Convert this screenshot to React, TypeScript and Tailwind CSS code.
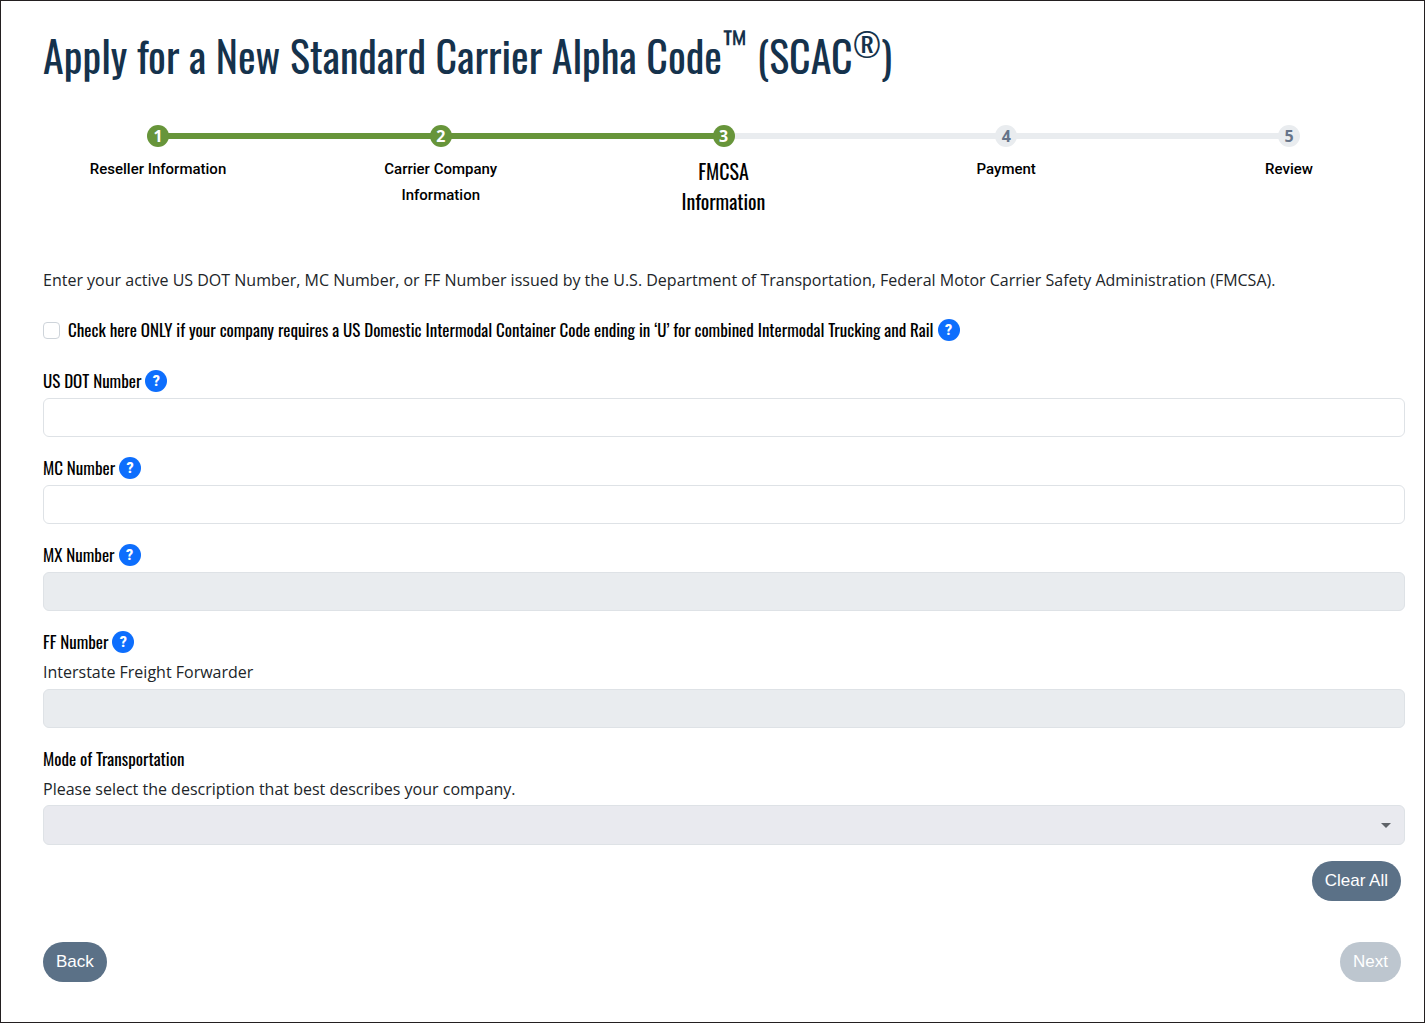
import { clsx } from 'clsx'

const steps = [
  { label: 'Reseller Information', state: 'done' },
  { label: 'Carrier Company\nInformation', state: 'done' },
  { label: 'FMCSA\nInformation', state: 'current' },
  { label: 'Payment', state: 'todo' },
  { label: 'Review', state: 'todo' },
]

const narrow = "font-['Oswald','Roboto_Condensed','Liberation_Sans_Narrow',sans-serif]"

const pill =
  "h-10 rounded-full px-[13px] font-['Liberation_Sans',sans-serif] text-[17px] text-white"

function Help({ topic }: { topic: string }) {
  return (
    <button
      type="button"
      aria-label={`Help for ${topic}`}
      className="flex size-[22px] shrink-0 items-center justify-center rounded-full bg-[#0d6efd] font-['Roboto',sans-serif] text-sm font-black text-white"
    >
      ?
    </button>
  )
}

function Stepper() {
  return (
    <div className="pr-9 pl-[35px]">
      <div className="mx-20 flex h-1.5">
        {steps.slice(1).map((step) => (
          <div
            key={step.label}
            className={clsx('flex-1', step.state === 'todo' ? 'bg-[#e9ecef]' : 'bg-[#67953a]')}
          />
        ))}
      </div>
      <ol className="relative -mt-3.5 flex h-[106px] justify-between">
        {steps.map((step, i) => (
          <li key={step.label} className="flex w-40 flex-col items-center gap-[9px]">
            <span
              className={clsx(
                'flex size-[22px] items-center justify-center rounded-full text-base font-bold',
                step.state === 'todo' ? 'bg-[#e9ecef] text-[#667489]' : 'bg-[#67953a] text-white',
              )}
            >
              {i + 1}
            </span>
            <span
              className={clsx(
                'text-center whitespace-pre-line text-black',
                step.state === 'current'
                  ? `${narrow} text-xl leading-[30px]`
                  : "font-['Roboto',sans-serif] text-[15px] leading-[26px] font-medium",
              )}
            >
              {step.label}
            </span>
          </li>
        ))}
      </ol>
    </div>
  )
}

type FieldProps = {
  id: string
  label: string
  hint?: string
  disabled?: boolean
}

function Field({ id, label, hint, disabled }: FieldProps) {
  return (
    <div className="mb-5">
      <div className="mb-1.5 flex h-[22px] items-center gap-1">
        <label htmlFor={id} className={`${narrow} text-[17px] leading-[22px] text-black`}>
          {label}
        </label>
        <Help topic={label} />
      </div>
      {hint && <p className="mb-1 leading-[26px]">{hint}</p>}
      <input
        id={id}
        type="text"
        disabled={disabled}
        className="block h-[39px] w-full rounded-md border border-[#dee2e6] bg-white px-3 disabled:bg-[#e9ecef]"
      />
    </div>
  )
}

export default function App() {
  return (
    <div className="min-h-screen border border-[#231f20] bg-white pt-5 pr-[19px] pb-9 pl-[42px] font-['Open_Sans',sans-serif] text-base text-[#212529]">
      <h1 className={`${narrow} text-[42px] leading-[68px] text-[#15324c]`}>
        Apply for a New Standard Carrier Alpha Code
        <sup className="-top-4 text-[34px]">™</sup> (SCAC
        <sup className="-top-4 text-[32px]">®</sup>)
      </h1>

      <div className="mt-11">
        <Stepper />
      </div>

      <form className="mt-[37px]">
        <p className="leading-6">
          Enter your active US DOT Number, MC Number, or FF Number issued by the U.S. Department of
          Transportation, Federal Motor Carrier Safety Administration (FMCSA).
        </p>

        <div className="mt-[27px] mb-[29px] flex h-[22px] items-center">
          <input
            id="intermodal"
            type="checkbox"
            className="mr-2 size-[17px] shrink-0 appearance-none rounded border border-[#ced4da] checked:bg-[#0d6efd]"
          />
          <label htmlFor="intermodal" className={`${narrow} mr-1 text-[17px] text-black`}>
            Check here ONLY if your company requires a US Domestic Intermodal Container Code ending
            in ‘U’ for combined Intermodal Trucking and Rail
          </label>
          <Help topic="intermodal container code" />
        </div>

        <Field id="dot" label="US DOT Number" />
        <Field id="mc" label="MC Number" />
        <Field id="mx" label="MX Number" disabled />
        <Field id="ff" label="FF Number" hint="Interstate Freight Forwarder" disabled />

        <label
          htmlFor="mode"
          className={`${narrow} mb-1.5 block text-[17px] leading-[22px] text-black`}
        >
          Mode of Transportation
        </label>
        <p className="mb-[3px] leading-[26px]">
          Please select the description that best describes your company.
        </p>
        <div className="relative">
          <select
            id="mode"
            disabled
            className="block h-10 w-full appearance-none rounded-md border border-[#dee2e6] bg-[#e9eaef] px-3 opacity-100"
          />
          <svg
            viewBox="0 0 10 5"
            className="pointer-events-none absolute top-[18px] right-3.5 h-[5px] w-2.5 fill-[#5f6368]"
          >
            <path d="M0 0h10L5 5z" />
          </svg>
        </div>

        <div className="mt-4 mr-1 flex justify-end">
          <button type="reset" className={`${pill} bg-[#5b7187]`}>
            Clear All
          </button>
        </div>
        <div className="mt-[41px] mr-1 flex justify-between">
          <button type="button" className={`${pill} bg-[#5b7187]`}>
            Back
          </button>
          <button type="submit" disabled className={`${pill} bg-[#bdc6cf]`}>
            Next
          </button>
        </div>
      </form>
    </div>
  )
}
